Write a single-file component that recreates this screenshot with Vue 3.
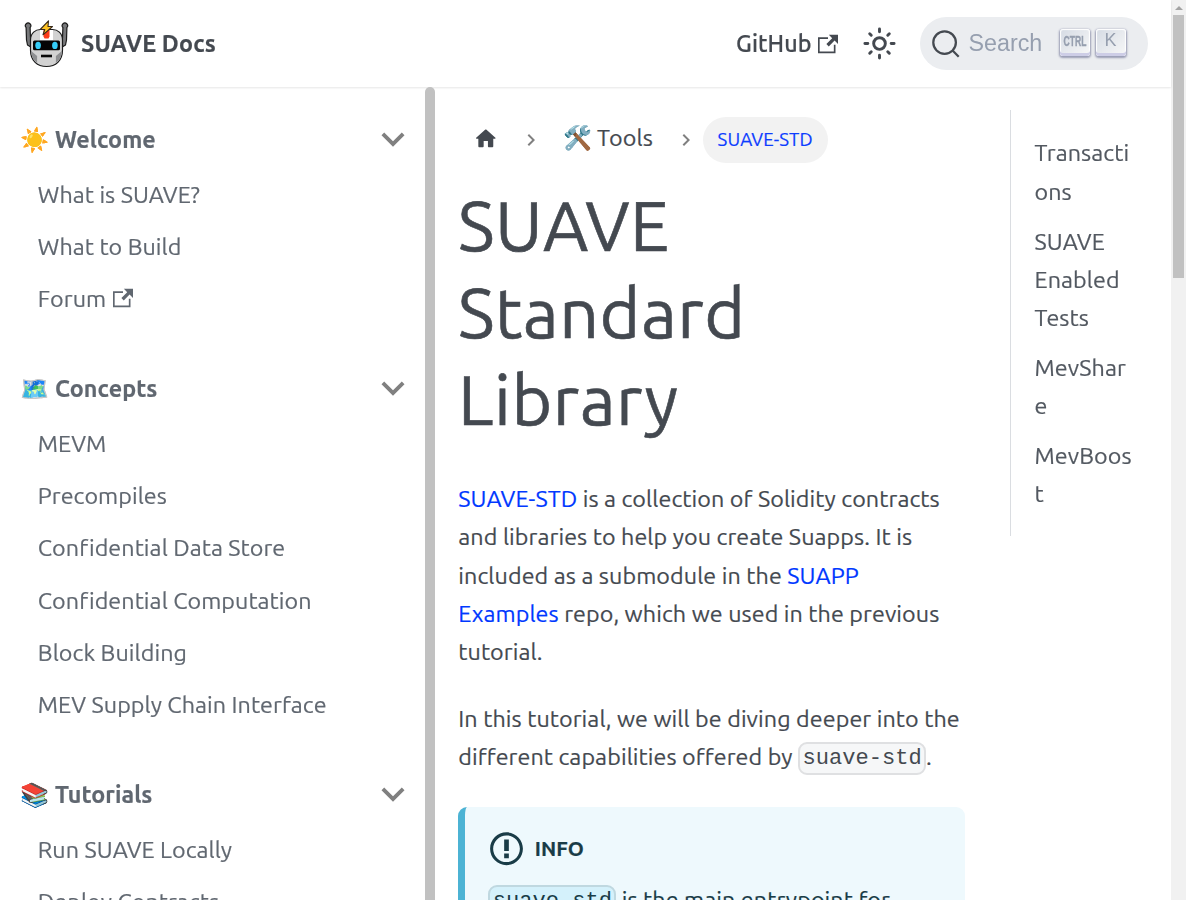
<script setup>
const menu = [
  { icon: '☀️', label: 'Welcome', items: [
    { label: 'What is SUAVE?' },
    { label: 'What to Build' },
    { label: 'Forum', external: true },
  ] },
  { icon: '🗺️', label: 'Concepts', items: [
    { label: 'MEVM' },
    { label: 'Precompiles' },
    { label: 'Confidential Data Store' },
    { label: 'Confidential Computation' },
    { label: 'Block Building' },
    { label: 'MEV Supply Chain Interface' },
  ] },
  { icon: '📚', label: 'Tutorials', items: [
    { label: 'Run SUAVE Locally' },
    { label: 'Deploy Contracts' },
  ] },
]

const toc = ['Transactions', 'SUAVE Enabled Tests', 'MevShare', 'MevBoost']

const external =
  'M21 13v10h-21v-19h12v2h-10v15h17v-8h2zm3-12h-10.988l4.035 4-6.977 7.07 2.828 2.828 6.977-7.07 4.125 4.172v-11z'
const chevron = 'M7.41 15.41L12 10.83l4.59 4.58L18 14l-6-6-6 6z'
</script>

<template>
  <div class="page">
    <div class="site">
      <header class="navbar">
        <a class="brand">
          <svg class="logo" viewBox="0 0 44 48">
            <g stroke="#1b1b1b" stroke-width="1.2" stroke-linejoin="round">
              <path fill="#77787a" d="M1.6 7.5a2.7 2.7 0 1 1 4 0L6 18l3 2-1 8-5-3-1-5z" />
              <path fill="#77787a" d="M42.4 7.5a2.7 2.7 0 1 0-4 0L38 18l-3 2 1 8 5-3 1-5z" />
              <path fill="#d2d2d2" d="M6 20C6 13 11 9.500 16 9.500h12c5 0 10 3.500 10 10.500v10c0 11-7 16.500-16 16.500S6 41 6 30z" />
            </g>
            <path fill="#8f9092" d="M6.600 31l6 5v7c-4-3-6-7-6-12zM37.400 31l-6 5v7c4-3 6-7 6-12z" />
            <path fill="#fff" d="M15.500 10h13v10h-13z" />
            <path fill="#fb3b19" d="M19 10h6v6.500l-1 2h-4l-1-2z" />
            <rect x="8.500" y="20.500" width="27" height="9.800" rx="1.500" fill="#050505" />
            <ellipse cx="13.600" cy="25.400" rx="2.800" ry="3.600" fill="#35cdf8" />
            <ellipse cx="30.400" cy="25.400" rx="2.800" ry="3.600" fill="#35cdf8" />
            <path d="M16.500 36h11" stroke="#080808" stroke-width="2.600" />
            <path fill="#ffc321" stroke="#382a1b" stroke-width="1.100" stroke-linejoin="round" d="M24 .8l-8.300 8.700h4.600l-1.800 5.300 9.500-8.300h-4.500z" />
          </svg>
          <span>SUAVE Docs</span>
        </a>
        <div class="nav-right">
          <a class="github"><span>GitHub</span><svg class="ext" viewBox="0 0 24 24"><path :d="external" /></svg></a>
          <svg class="sun" viewBox="0 0 24 24" fill="none" stroke="currentColor" stroke-width="2" stroke-linecap="round">
            <circle cx="12" cy="12" r="4" />
            <path d="M2 12h2M20 12h2M12 2v2M12 20v2M5.280 5.280l1.060 1.060M17.660 17.660l1.060 1.060M5.280 18.720l1.060-1.060M17.660 6.340l1.060-1.060" />
          </svg>
          <div class="search">
            <svg class="lens" viewBox="0 0 20 20" fill="none" stroke="currentColor" stroke-width="1.500" stroke-linecap="round">
              <path d="M14.386 14.386l4.088 4.088-4.088-4.088c-2.942 2.942-7.711 2.942-10.653 0-2.942-2.942-2.942-7.711 0-10.653 2.942-2.942 7.711-2.942 10.653 0 2.942 2.942 2.942 7.711 0 10.653z" />
            </svg>
            <span class="placeholder">Search</span>
            <kbd class="key"><span class="ctrl">CTRL</span></kbd>
            <kbd class="key k">K</kbd>
          </div>
        </div>
      </header>

      <div class="columns">
        <aside class="sidebar">
          <nav class="menu">
            <section v-for="cat in menu" :key="cat.label" class="category">
              <div class="cat-head">
                <span>{{ cat.icon }} {{ cat.label }}</span>
                <svg class="caret" viewBox="0 0 24 24"><path :d="chevron" /></svg>
              </div>
              <a v-for="item in cat.items" :key="item.label" class="item">
                <span>{{ item.label }}</span>
                <svg v-if="item.external" class="ext" viewBox="0 0 24 24"><path :d="external" /></svg>
              </a>
            </section>
          </nav>
          <div class="side-track"></div>
        </aside>

        <main class="content">
          <nav class="crumbs">
            <svg class="home" viewBox="0 0 24 24"><path d="M10 19v-5h4v5c0 .55.45 1 1 1h3c.55 0 1-.45 1-1v-7h1.700c.46 0 .68-.57.33-.87L12.670 3.600c-.38-.34-.96-.34-1.340 0l-8.360 7.530c-.34.3-.13.87.33.87H5v7c0 .55.45 1 1 1h3c.55 0 1-.45 1-1z" /></svg>
            <svg class="sep" viewBox="0 0 24 24"><path :d="chevron" /></svg>
            <span class="crumb">🛠️ Tools</span>
            <svg class="sep" viewBox="0 0 24 24"><path :d="chevron" /></svg>
            <span class="pill">SUAVE-STD</span>
          </nav>

          <h1>SUAVE Standard Library</h1>

          <p>
            <a>SUAVE-STD</a> is a collection of Solidity contracts and libraries
            to help you create Suapps. It is included as a submodule in the
            <a>SUAPP Examples</a> repo, which we used in the previous tutorial.
          </p>
          <p>
            In this tutorial, we will be diving deeper into the different
            capabilities offered by <code>suave-std</code>.
          </p>

          <div class="info">
            <div class="info-head">
              <svg viewBox="0 0 14 16"><path fill-rule="evenodd" d="M7 2.300c3.140 0 5.700 2.560 5.700 5.700s-2.560 5.700-5.700 5.700A5.710 5.710 0 0 1 1.300 8c0-3.140 2.560-5.700 5.700-5.700zM7 1C3.140 1 0 4.140 0 8s3.140 7 7 7 7-3.140 7-7-3.140-7-7-7zm1 3H6v5h2V4zm0 6H6v2h2v-2z" /></svg>
              <span>INFO</span>
            </div>
            <div class="info-body"><code>suave-std</code> is the main entrypoint for</div>
          </div>
        </main>

        <aside class="toc">
          <a v-for="entry in toc" :key="entry" class="toc-item">{{ entry }}</a>
        </aside>
      </div>
    </div>
    <div class="scrollbar"><div class="arrow"></div><div class="thumb"></div></div>
  </div>
</template>

<style>
body { overflow: hidden; background: #fff; }
</style>

<style scoped>
.page {
  display: flex;
  width: 1186px;
  height: 900px;
  overflow: hidden;
  font-family: Ubuntu, "Noto Sans", sans-serif;
  font-size: 23.3px;
  letter-spacing: 0.085px;
  -webkit-text-stroke: 0.2px currentColor;
  line-height: 38.35px;
  color: #444950;
}
svg { display: block; flex: none; fill: currentColor; }

.site { width: 1171px; display: flex; flex-direction: column; }
.navbar {
  height: 87px;
  flex: none;
  display: flex;
  justify-content: space-between;
  align-items: center;
  box-sizing: border-box;
  padding: 0 23px 0 24px;
  box-shadow: 0 1px 2px 0 rgba(0, 0, 0, 0.1);
  position: relative;
  will-change: transform;
}
.brand { display: flex; align-items: center; font-weight: 700; letter-spacing: 0.17px; }
.logo { width: 45px; height: 48px; margin-right: 12px; fill: none; }
.nav-right { display: flex; align-items: center; }
.github { display: flex; align-items: center; font-weight: 500; margin-right: 24px; }
.ext { width: 20px; height: 20px; margin-left: 6.4px; }
.sun { width: 35px; height: 35px; fill: none; margin-right: 23px; }
.search {
  width: 228px;
  height: 53px;
  box-sizing: border-box;
  display: flex;
  align-items: center;
  padding-left: 11px;
  background: #ebedf0;
  border-radius: 40px;
  font-family: "Liberation Sans", sans-serif;
  letter-spacing: 0;
  -webkit-text-stroke: 0;
}
.lens { width: 30px; height: 30px; fill: none; }
.placeholder { font-size: 23.3px; color: #969faf; margin: 0 17.3px 0 7.5px; }
.key {
  width: 30px;
  height: 27px;
  box-sizing: border-box;
  display: flex;
  justify-content: center;
  align-items: center;
  margin-right: 6px;
  margin-top: -3px;
  padding-bottom: 2px;
  border-radius: 3px;
  background: linear-gradient(-225deg, #d5dbe4, #f8f8f8);
  box-shadow: inset 0 -3px 0 0 #cdcde6, inset 0 0 1px 1px #fff, 0 1px 2px 1px rgba(30, 35, 90, 0.4);
  color: #969faf;
  font-family: "Liberation Sans", sans-serif;
  font-size: 18px;
  line-height: 20px;
}
.k { padding-bottom: 5px; }
.ctrl { font-size: 15px; font-weight: 700; transform: scaleX(0.57); -webkit-text-stroke: 0.4px #969faf; }

.columns { display: flex; flex: 1; min-height: 0; }
.sidebar { width: 435px; flex: none; display: flex; overflow: hidden; color: #606770; will-change: transform; }
.menu { flex: 1; padding: 23.3px 7.5px 0 20.3px; }
.side-track { width: 10px; background: #c1c1c1; border-radius: 5px 5px 0 0; }
.category { margin-bottom: 34.9px; }
.cat-head { height: 57.7px; display: flex; align-items: center; font-weight: 700; }
.caret { width: 46px; height: 46px; margin-left: auto; transform: rotate(180deg); fill: #808080; margin-right: 1.3px; }
.item { height: 52.2px; display: flex; align-items: center; padding-left: 17.5px; letter-spacing: 0.06px; }

.content { width: 507px; flex: none; margin-left: 23px; padding-top: 30px; }
.crumbs { display: flex; align-items: center; height: 46px; }
.home { width: 25.6px; height: 25.6px; margin-left: 15px; margin-top: -3px; }
.sep { width: 24px; height: 24px; margin-left: 20px; transform: rotate(90deg); fill: #808080; }
.crumb { margin-left: 20px; margin-top: -5px; width: 91px; white-space: nowrap; }
.pill {
  height: 46px;
  width: 125px;
  box-sizing: border-box;
  margin-left: 5.5px;
  padding: 0 0 0 14.5px;
  display: flex;
  align-items: center;
  border-radius: 47px;
  background: #f2f2f2;
  color: #0d3dff;
  font-size: 18.6px;
}
h1 {
  width: 330px;
  margin: 19px 0 36px;
  font-size: 69.7px;
  line-height: 87px;
  font-weight: 400;
  letter-spacing: 0.55px;
  -webkit-text-stroke: 0.6px #444950;
}
p { margin: 0 0 28.4px; padding: 0 4px 0 0.3px; }
p a { color: #0038ff; }
code {
  font-family: "Liberation Mono", monospace;
  font-size: 22.1px;
  letter-spacing: 0;
  -webkit-text-stroke: 0;
  line-height: 29px;
  display: inline-block;
  height: 33px;
  box-sizing: border-box;
  vertical-align: middle;
  margin-top: -2px;
  padding: 0 2.33px;
  background: #f6f7f8;
  border: 2px solid #dfe0e2;
  border-radius: 9px;
}
.info {
  height: 200px;
  margin-top: 31px;
  padding: 24.5px 23.3px 0;
  border-left: 7px solid #4cb3d4;
  border-radius: 9px;
  background: #eef9fd;
  color: #193c47;
}
.info-head { display: flex; align-items: center; height: 36px; font-size: 20.4px; font-weight: 700; }
.info-head svg { width: 33px; height: 37.5px; margin: -1px 12px 0 1.5px; }
.info-body { margin-top: 13px; white-space: nowrap; }
.info code { background: #d4f1fb; border-color: #bfd8e0; }

.toc {
  width: 137px;
  height: 426px;
  box-sizing: border-box;
  margin: 23px 0 0 45px;
  padding: 23.3px 12px 0 23.5px;
  border-left: 1px solid #dadde1;
  color: #525860;
  will-change: transform;
}
.toc-item { display: block; margin-bottom: 11.8px; line-height: 38.2px; overflow-wrap: break-word; }

.scrollbar { width: 15px; background: #f1f1f1; display: flex; flex-direction: column; align-items: center; }
.arrow { margin-top: 6px; border: 4px solid transparent; border-top: 0; border-bottom: 4px solid #a3a3a3; height: 0; }
.thumb { width: 11px; height: 263px; margin-top: 5px; background: #c1c1c1; }
</style>
